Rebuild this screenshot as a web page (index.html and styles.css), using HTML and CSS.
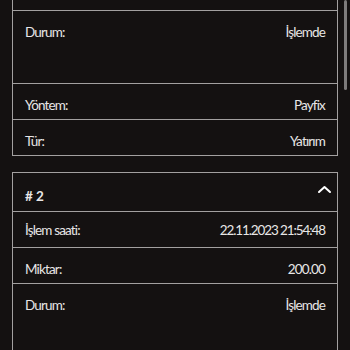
FILE: index.html
```html
<!DOCTYPE html>
<html lang="tr">
<head>
    <meta charset="UTF-8">
    <meta name="viewport" content="width=device-width, initial-scale=1.0">
    <title>İşlemler</title>
    <link rel="stylesheet" href="styles.css">
</head>
<body>
    <div class="scrollbar"></div>
    <div class="list">
        <div class="card">
            <div class="row row-first"><span>Miktar:</span><span>200.00</span></div>
            <div class="row row-tall"><span>Durum:</span><span>İşlemde</span></div>
            <div class="row"><span>Yöntem:</span><span>Payfix</span></div>
            <div class="row"><span>Tür:</span><span>Yatırım</span></div>
        </div>
        <div class="card">
            <div class="card-head">
                <strong># 2</strong>
                <svg class="chevron" width="15" height="9" viewBox="0 0 15 9">
                    <path d="M2 7 L7.5 2 L13 7" fill="none" stroke="#fff" stroke-width="2" stroke-linecap="round" stroke-linejoin="round"/>
                </svg>
            </div>
            <div class="row row-first"><span>İşlem saati:</span><span class="date">22.11.2023 21:54:48</span></div>
            <div class="row"><span>Miktar:</span><span>200.00</span></div>
            <div class="row row-tall"><span>Durum:</span><span>İşlemde</span></div>
            <div class="row"><span>Yöntem:</span><span>Payfix</span></div>
        </div>
    </div>
</body>
</html>
```

FILE: styles.css
```css
body {
    background-color: #141111;
    color: #e8e6e6;
    font-family: Lato, "Noto Sans", sans-serif;
    font-size: 13.5px;
    letter-spacing: -0.85px;
    margin: 0;
    padding: 0 12px;
    overflow: hidden;
}
.scrollbar {
    position: fixed;
    top: 0;
    right: 3px;
    width: 3px;
    height: 90px;
    border-radius: 2px;
    background-color: #7d7b7b;
}
.list {
    margin-top: -26px;
}
.card {
    border: 1px solid #a3a0a0;
    margin-bottom: 16px;
}
.card-head {
    display: flex;
    justify-content: space-between;
    align-items: flex-start;
    padding: 15px 5px 7px 12px;
    border-bottom: 1px solid #a3a0a0;
    line-height: 16px;
    letter-spacing: 0;
}
.chevron {
    margin-top: -3px;
}
.row {
    display: flex;
    justify-content: space-between;
    padding: 13px 12px 6px;
    line-height: 16px;
    border-bottom: 1px solid #a3a0a0;
}
.row:last-child {
    border-bottom: none;
}
.row-first {
    padding-top: 10px;
    padding-bottom: 9px;
}
.row-tall {
    min-height: 53px;
}
.date {
    letter-spacing: -1.1px;
}
```
